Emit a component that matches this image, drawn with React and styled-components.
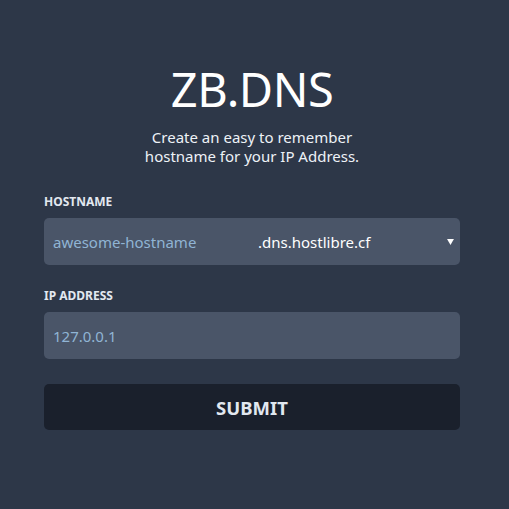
import React from 'react'
import styled, { createGlobalStyle } from 'styled-components';

const Global = createGlobalStyle`
  html, body {
    margin: 0;
    background: #2d3748;
  }
  body {
    font-family: 'Noto Sans', sans-serif;
    color: #fff;
  }
`;

const App = () => {
  return (
    <Page>
      <Global />
      <Form onSubmit={e => e.preventDefault()}>
        <Title>ZB.DNS</Title>
        <Subtitle>Create an easy to remember<br />hostname for your IP Address.</Subtitle>
        <Field>
          <Label>HOSTNAME</Label>
          <InputBox>
            <TextInput placeholder="awesome-hostname" />
            <Domain>
              <span>.dns.hostlibre.cf</span>
              <Caret viewBox="0 0 8 7"><path d="M0 0h8L4 7z" fill="#fff" /></Caret>
            </Domain>
          </InputBox>
        </Field>
        <Field>
          <Label>IP ADDRESS</Label>
          <InputBox>
            <TextInput placeholder="127.0.0.1" />
          </InputBox>
        </Field>
        <Submit type="submit">SUBMIT</Submit>
      </Form>
    </Page>
  )
}

export default App

const Page = styled.div`
  width: 100%;
  min-height: 509px;
  box-sizing: border-box;
  padding-left: 44px;
  display: flex;
`;

const Form = styled.form`
  width: 416px;
  padding-top: 61px;
  display: flex;
  flex-direction: column;
`;

const Title = styled.h1`
  margin: 0;
  text-align: center;
  font-weight: 400;
  font-size: 47px;
  line-height: 56px;
  letter-spacing: -0.5px;
`;

const Subtitle = styled.p`
  margin: 11px 0 0;
  text-align: center;
  font-size: 15px;
  line-height: 19px;
  color: #edf2f7;
`;

const Field = styled.div`
  margin-top: 28px;
  display: flex;
  flex-direction: column;
  & + & { margin-top: 23px; }
`;

const Label = styled.label`
  font-size: 12px;
  font-weight: 700;
  line-height: 15px;
  color: #e2e8f0;
  margin-bottom: 9px;
`;

const InputBox = styled.div`
  height: 47px;
  background: #4a5568;
  border-radius: 5px;
  display: flex;
  align-items: center;
`;

const TextInput = styled.input`
  flex: 1;
  min-width: 0;
  height: 100%;
  border: 0;
  background: transparent;
  outline: none;
  padding: 0 9px;
  font-family: 'Noto Sans', sans-serif;
  font-size: 15px;
  color: #fff;
  &::placeholder { color: #90b4d4; }
`;

const Domain = styled.div`
  flex: 1;
  display: flex;
  align-items: center;
  justify-content: space-between;
  padding: 0 6px 0 0;
  font-size: 15px;
  color: #fff;
`;

const Caret = styled.svg`
  width: 7px;
  height: 6px;
`;

const Submit = styled.button`
  margin-top: 25px;
  height: 46px;
  border: 0;
  border-radius: 5px;
  background: #1a202c;
  color: #e2e8f0;
  font-family: 'Noto Sans', sans-serif;
  font-size: 18.5px;
  font-weight: 700;
  cursor: pointer;
`;
